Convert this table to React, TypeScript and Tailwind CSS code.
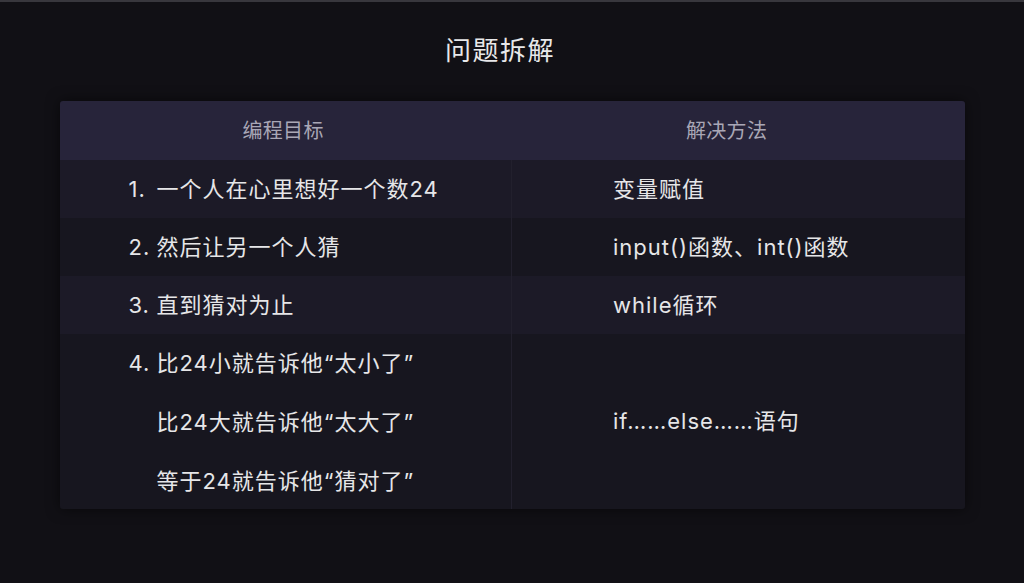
const rows = [
  { num: "1.", goal: ["一个人在心里想好一个数24"], method: "变量赋值", tall: false },
  { num: "2.", goal: ["然后让另一个人猜"], method: "input()函数、int()函数", tall: false },
  { num: "3.", goal: ["直到猜对为止"], method: "while循环", tall: false },
  {
    num: "4.",
    goal: ["比24小就告诉他“太小了”", "比24大就告诉他“太大了”", "等于24就告诉他“猜对了”"],
    method: "if……else……语句",
    tall: true,
  },
];

export default function App() {
  return (
    <div
      className="min-h-screen h-[583px] bg-[#111015] border-t-2 border-[#38373d] overflow-hidden"
      style={{ fontFamily: '"Inter", "Noto Sans CJK SC", sans-serif' }}
    >
      {/* Title */}
      <h1 className="pt-[31px] pr-[24px] text-center text-[26px] leading-[36px] tracking-[1.5px] font-normal text-[#e8e8ea]">
        问题拆解
      </h1>

      {/* Table */}
      <div className="mt-[32px] mx-auto w-[905px] rounded-[3px] overflow-hidden shadow-[0_0_14px_rgba(0,0,0,0.55)]">
        <div className="grid grid-cols-2 h-[59px] bg-[#27243a] text-[20px] tracking-[0.3px] text-[#a9a7b6] items-center">
          <div className="pl-[183px]">编程目标</div>
          <div className="pl-[174px]">解决方法</div>
        </div>

        {rows.map((row, i) => (
          <div
            key={row.num}
            className={`grid grid-cols-2 text-[22px] tracking-[1px] text-[#e6e6e8] ${
              i % 2 === 0 ? "bg-[#1c1a27]" : "bg-[#17161f]"
            } ${row.tall ? "h-[175px]" : "h-[58px]"}`}
          >
            <div className="flex flex-col justify-center gap-[23px] pl-[69px] border-r border-[#22202d]">
              {row.goal.map((g, j) => (
                <div key={g} className="flex leading-[36px]">
                  <span className="w-[28px] shrink-0">{j === 0 ? row.num : ""}</span>
                  <span>{g}</span>
                </div>
              ))}
            </div>
            <div className="flex items-center pl-[101px]">{row.method}</div>
          </div>
        ))}
      </div>
    </div>
  );
}
